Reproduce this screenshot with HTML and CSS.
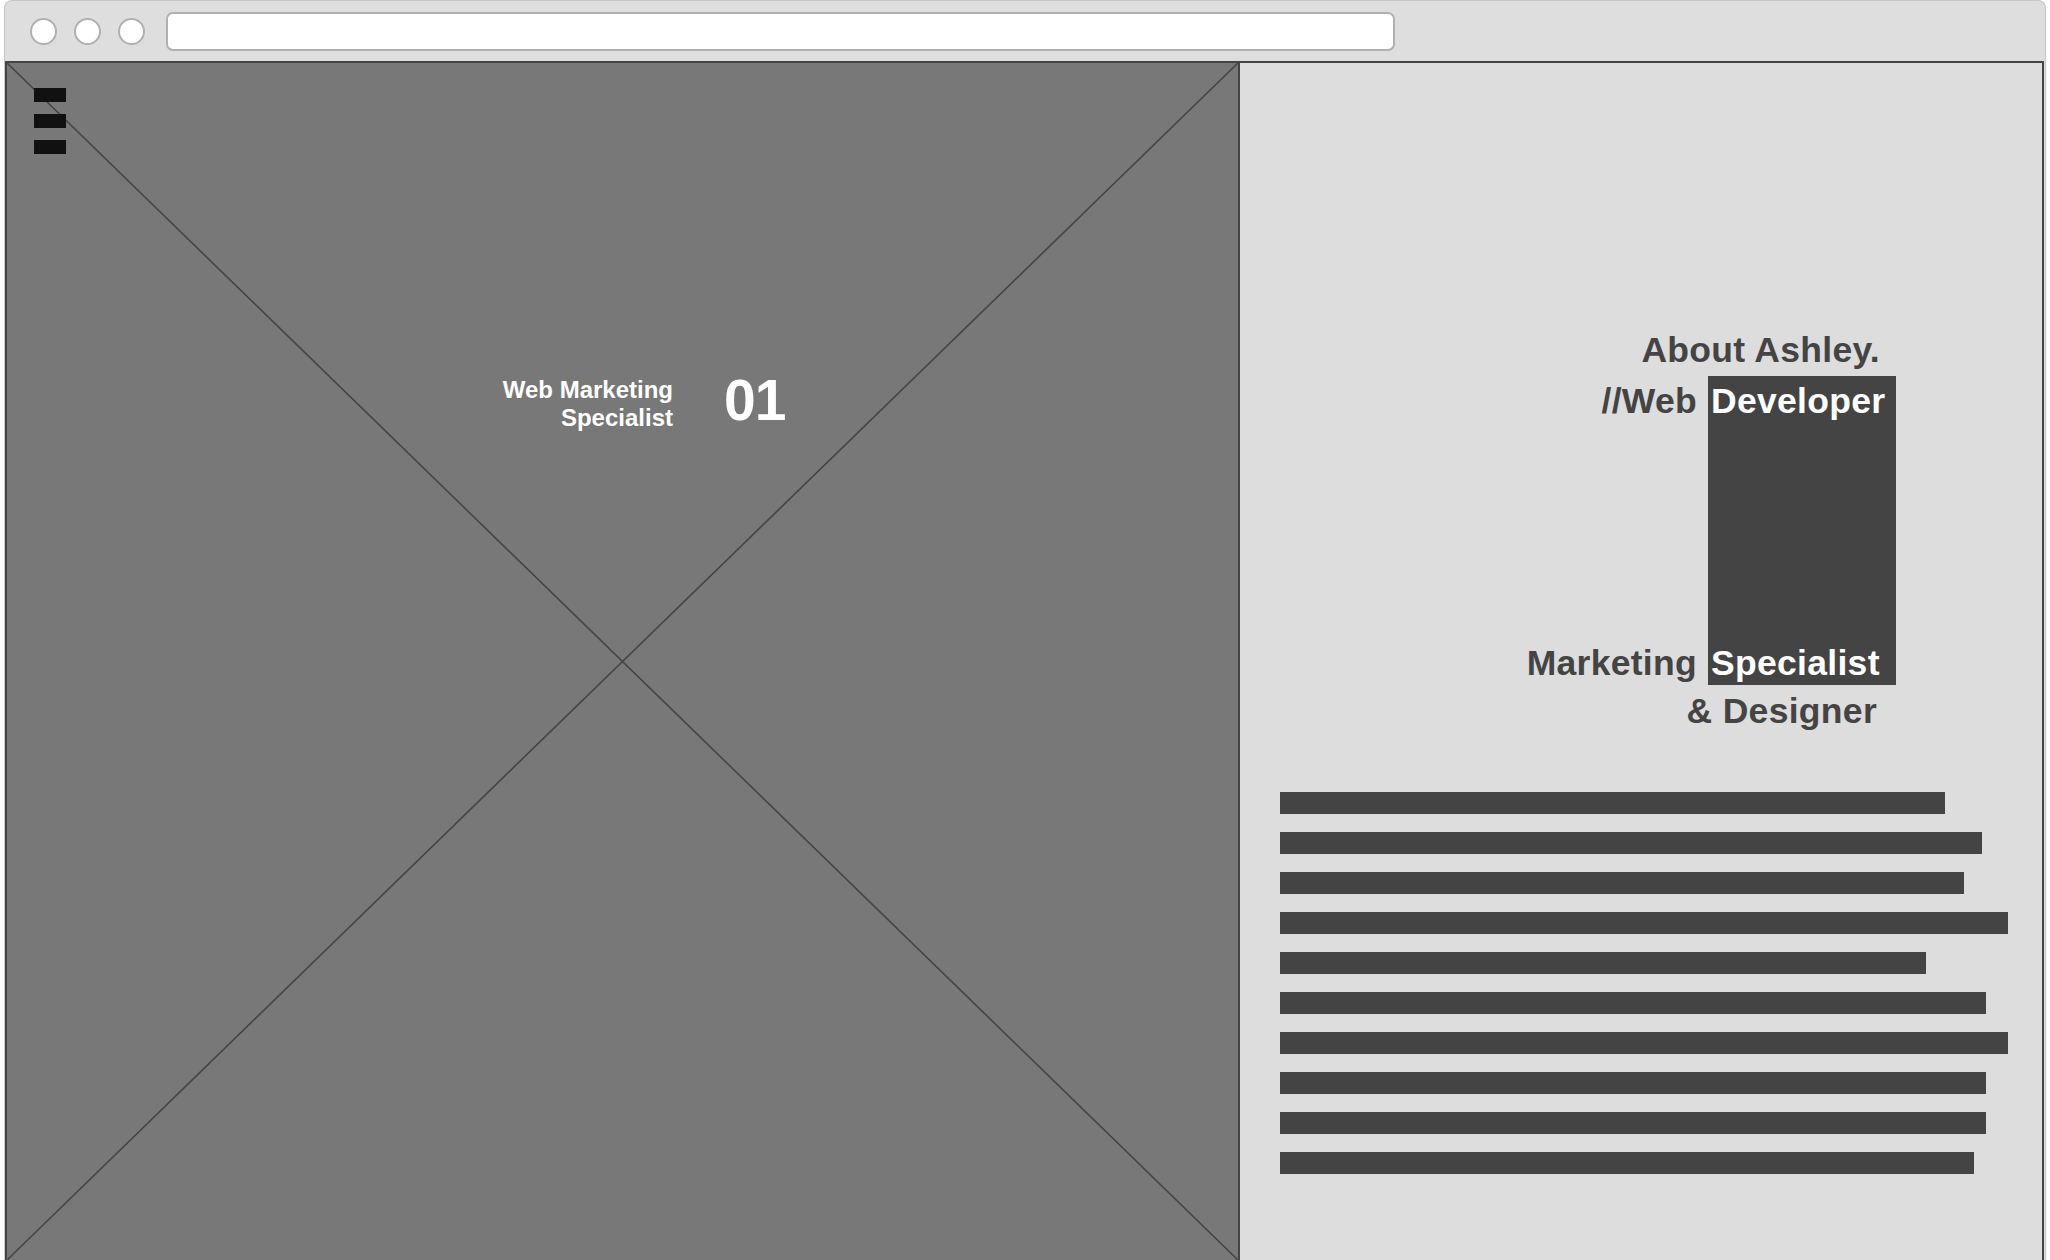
FILE: index.html
```html
<!DOCTYPE html>
<html lang="en">
<head>
<meta charset="utf-8">
<title>About Ashley</title>
<link rel="stylesheet" href="styles.css">
</head>
<body>
<div class="window">
  <div class="toolbar">
    <span class="dot"></span>
    <span class="dot"></span>
    <span class="dot"></span>
    <div class="url"></div>
  </div>
  <div class="content">
    <div class="hero">
      <svg class="cross" viewBox="0 0 100 100" preserveAspectRatio="none" aria-hidden="true">
        <line x1="0" y1="0" x2="100" y2="100"/>
        <line x1="100" y1="0" x2="0" y2="100"/>
      </svg>
      <div class="menu">
        <span></span><span></span><span></span>
      </div>
      <div class="caption">
        <div class="caption-text">Web Marketing<br>Specialist</div>
        <div class="caption-num">01</div>
      </div>
    </div>
    <div class="about">
      <div class="title">
        <div class="title-line first">About Ashley.</div>
        <div class="title-row">
          <div class="title-col">
            <span>//Web</span>
            <span>Marketing</span>
          </div>
          <div class="title-box">
            <span>Developer</span>
            <span>Specialist</span>
          </div>
        </div>
        <div class="title-line last">&amp; Designer</div>
      </div>
      <div class="lines">
        <div class="bar" style="width:665px"></div>
        <div class="bar" style="width:702px"></div>
        <div class="bar" style="width:684px"></div>
        <div class="bar" style="width:728px"></div>
        <div class="bar" style="width:646px"></div>
        <div class="bar" style="width:706px"></div>
        <div class="bar" style="width:728px"></div>
        <div class="bar" style="width:706px"></div>
        <div class="bar" style="width:706px"></div>
        <div class="bar" style="width:694px"></div>
      </div>
    </div>
  </div>
</div>
</body>
</html>
```

FILE: styles.css
```css
* { box-sizing: border-box; }

html, body {
  margin: 0;
  padding: 0;
  background: #ffffff;
  height: 1260px;
  overflow: hidden;
  font-family: "Liberation Sans", Arial, sans-serif;
}

.window {
  margin: 0 4px 0 4px;
  border: 1px solid #c6c6c6;
  border-bottom: none;
  border-radius: 8px 8px 0 0;
  background: #dedede;
  height: 1260px;
  overflow: hidden;
}

.toolbar {
  height: 60px;
  display: flex;
  align-items: center;
  padding-left: 25px;
  padding-top: 1px;
}

.dot {
  width: 27px;
  height: 27px;
  border-radius: 50%;
  background: #ffffff;
  border: 2px solid #b0b0b0;
  margin-right: 17px;
}

.dot:nth-child(3) { margin-right: 21px; }

.url {
  width: 1229px;
  height: 39px;
  background: #ffffff;
  border: 2px solid #b0b0b0;
  border-radius: 7px;
}

.content {
  display: flex;
  height: 1199px;
  margin-right: 1px;
  border: 2px solid #444444;
  border-bottom: none;
}

.hero {
  position: relative;
  flex: 0 0 1233px;
  background: #787878;
  border-right: 2px solid #444444;
  display: flex;
  flex-direction: column;
}

.cross {
  position: absolute;
  left: 0;
  top: 0;
  width: 100%;
  height: 100%;
}

.cross line {
  stroke: #454545;
  stroke-width: 1.6;
  vector-effect: non-scaling-stroke;
}

.menu {
  position: relative;
  display: flex;
  flex-direction: column;
  gap: 12px;
  margin: 25px 0 0 27px;
}

.menu span {
  display: block;
  width: 32px;
  height: 14px;
  background: #111111;
}

.caption {
  position: relative;
  display: flex;
  align-items: flex-start;
  margin: 218px 0 0 466px;
  color: #ffffff;
  font-weight: bold;
}

.caption-text {
  width: 200px;
  text-align: right;
  font-size: 24px;
  line-height: 28px;
  margin-top: 4px;
}

.caption-num {
  margin-left: 51px;
  font-size: 57px;
  line-height: 56px;
  letter-spacing: -1px;
}

.about {
  flex: 1;
  min-width: 0;
  background: #dddddd;
  padding: 263px 146px 0 40px;
  display: flex;
  flex-direction: column;
}

.title {
  align-self: flex-end;
  display: flex;
  flex-direction: column;
  align-items: flex-end;
  color: #444444;
  font-weight: bold;
  font-size: 35.5px;
  letter-spacing: 0.3px;
}

.title-line {
  line-height: 48px;
  white-space: nowrap;
}

.title-line.first { padding-right: 16px; }
.title-line.last { padding-right: 19px; padding-top: 2px; }

.title-row {
  display: flex;
  margin-top: 2px;
  height: 309px;
}

.title-col,
.title-box {
  display: flex;
  flex-direction: column;
  justify-content: space-between;
  line-height: 42px;
  padding-top: 4px;
  padding-bottom: 1px;
  white-space: nowrap;
}

.title-col {
  align-items: flex-end;
  margin-right: 11px;
}

.title-box {
  width: 188px;
  background: #444444;
  color: #ffffff;
  padding-left: 3px;
}

.lines {
  margin-top: 57px;
  display: flex;
  flex-direction: column;
  align-items: flex-start;
  gap: 18px;
}

.bar {
  flex: none;
  height: 22px;
  background: #444444;
}
```
